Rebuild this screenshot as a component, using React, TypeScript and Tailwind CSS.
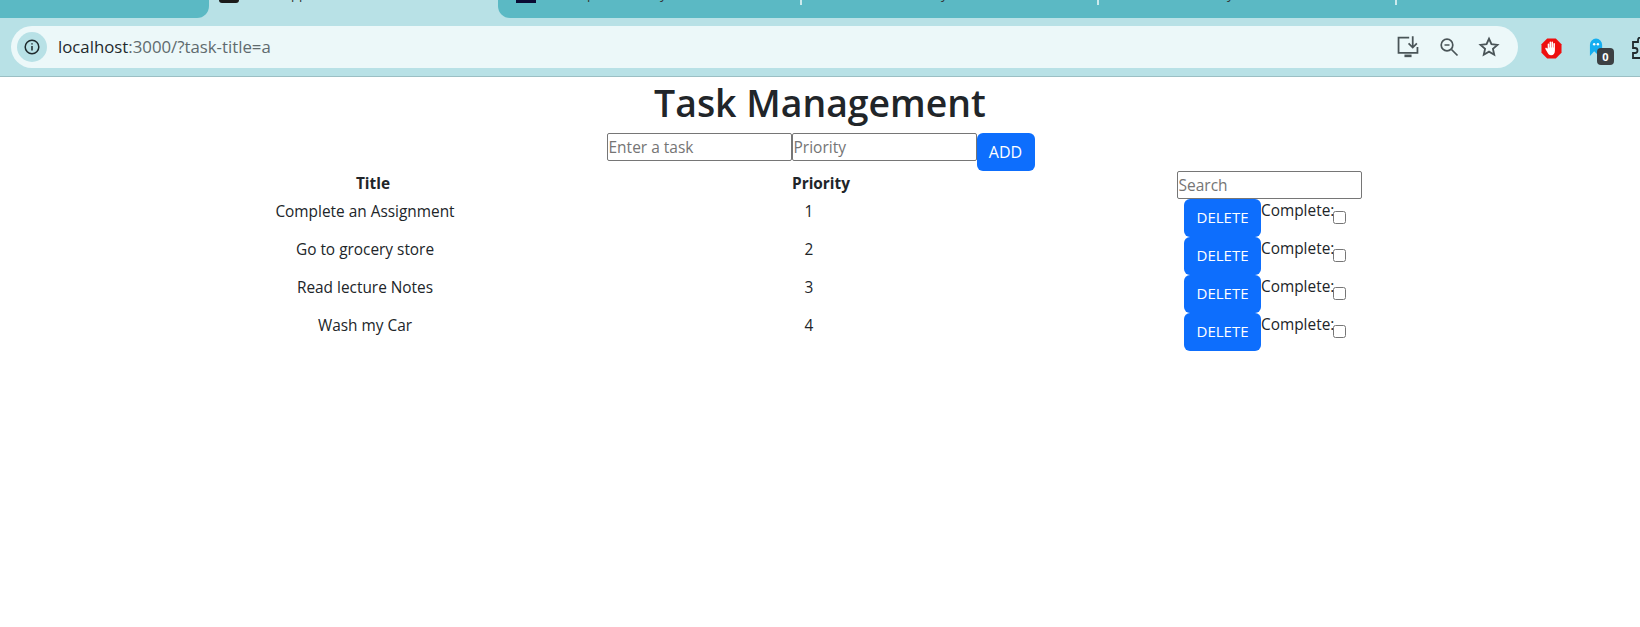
const rows = [
  { title: "Complete an Assignment", priority: 1 },
  { title: "Go to grocery store", priority: 2 },
  { title: "Read lecture Notes", priority: 3 },
  { title: "Wash my Car", priority: 4 },
]

const Separator = () => <div className="w-[2px] h-[5px] shrink-0 bg-[#cdeaed]"></div>

const TabStrip = () => {
  const label = "text-[13px] leading-[18px] -mt-[15px] text-[#333]"
  return <div className="flex h-[18px] bg-[#b8e1e6] overflow-hidden">
    <div className="w-[209px] h-full bg-[#5bb9c4] rounded-br-[12px]"></div>
    <div className="w-[289px] flex items-start pl-[10px]">
      <div className="w-[20px] h-[13px] -mt-[10px] rounded-[3px] bg-[#1b1b1b]"></div>
      <span className={`ml-[7px] ${label}`}>React App</span>
    </div>
    <div className="flex-1 h-full flex items-start bg-[#5bb9c4] rounded-bl-[12px]">
      <div className="w-[302px] flex items-start pl-[18px]">
        <div className="w-[20px] h-[13px] -mt-[10px] bg-[#0a0a33]"></div>
        <span className={`ml-[51px] ${label}`}>p</span>
        <span className={`ml-[65px] ${label}`}>y</span>
      </div>
      <Separator />
      <div className="w-[295px] flex items-start pl-[139px]">
        <span className={label}>y</span>
      </div>
      <Separator />
      <div className="w-[296px] flex items-start pl-[128px]">
        <span className={label}>y</span>
      </div>
      <Separator />
    </div>
  </div>
}

const Toolbar = () => {
  return <div className="h-[59px] bg-[#b8e1e6] border-b border-[#9bbfc4] pt-2 pl-[11px] flex items-start">
    <div className="w-[1507px] shrink-0 h-[42px] rounded-full bg-[#ecf8f9] flex items-center pl-[6px]">
      <div className="w-[30px] h-[30px] rounded-full bg-[#b8e1e6] flex items-center justify-center">
        <svg width="16" height="16" viewBox="0 0 16 16" fill="none" stroke="#1f2a2d" strokeWidth="1.5">
          <circle cx="8" cy="8" r="6.8" />
          <path d="M8 7v4.5M8 4.2v1.4" />
        </svg>
      </div>
      <span className="ml-[11px] text-[16.8px] text-[#1f2a2d]">localhost<span className="text-[#5f6b6e]">:3000/?task-title=a</span></span>
      <div className="ml-auto flex items-center">
        <svg width="26" height="26" viewBox="0 0 22 22" fill="none" stroke="#4a5558" strokeWidth="1.5">
          <path d="M12 3H3v13h16v-5" />
          <path d="M8 18.5h6" strokeWidth="2.2" />
          <path d="M15 2v9M11.5 8l3.500 3.500L18.500 8" />
        </svg>
        <svg className="ml-[18px]" width="20" height="20" viewBox="0 0 20 20" fill="none" stroke="#4a5558" strokeWidth="1.7">
          <circle cx="8" cy="8" r="5.8" />
          <path d="M5.500 8h5M12.500 12.500l6 6" />
        </svg>
        <svg className="ml-[19px] mr-[18px]" width="22" height="22" viewBox="0 0 24 24" fill="none" stroke="#4a5558" strokeWidth="2">
          <path d="M12 3l2.700 6 6.500.7-4.900 4.300 1.400 6.400L12 17.100l-5.700 3.300 1.400-6.400-4.900-4.300 6.500-.7z" />
        </svg>
      </div>
    </div>
    <div className="flex items-start pt-3 pl-[23px]">
      <svg className="shrink-0" width="21" height="21" viewBox="0 0 22 22">
        <path d="M6.500 0.500h9l6 6v9l-6 6h-9l-6-6v-9z" fill="#ee0f0f" />
        <path d="M7 11V6.500a.8.8 0 011.600 0V10h.4V4.500a.8.8 0 011.600 0V10h.4V4.500a.8.8 0 011.600 0V10h.4V6a.8.8 0 011.600 0v7c0 3-1.500 5-4 5-2 0-3-1-4-3l-2-3.500c-.5-1 .8-1.600 1.400-.8z" fill="#fff" />
      </svg>
      <div className="relative ml-[27px] shrink-0">
        <svg width="15" height="19" viewBox="0 0 16 20">
          <path d="M1 19V7a6.500 6.500 0 0113 0v9l-2.500-2-3 3-3-3z" fill="#14aef0" />
          <circle cx="5.500" cy="6.500" r="1.300" fill="#fff" />
          <circle cx="9.500" cy="6.500" r="1.300" fill="#fff" />
        </svg>
        <div className="absolute left-[8px] top-[10px] w-[17px] h-[17px] rounded-[4px] bg-[#3c4043] text-white text-[11px] font-bold leading-[17px] text-center">0</div>
      </div>
      <svg className="ml-[28px] -mt-px shrink-0" width="22" height="22" viewBox="0 0 22 22" fill="none" stroke="#1f2a2d" strokeWidth="1.8">
        <path d="M1 5h5V3a2.500 2.500 0 015 0v2h5v5h2a2.500 2.500 0 010 5h-2v6H1v-5h2a2.500 2.500 0 000-5H1z" />
      </svg>
    </div>
  </div>
}

export default function App() {
  return <div className="w-[1640px] h-[627px] bg-white overflow-hidden font-['Open_Sans',sans-serif] text-[15.4px] text-[#212529]">
    <TabStrip />
    <Toolbar />
    <h1 className="text-center text-[37.4px] leading-[48px] font-semibold pt-[2px] mb-[6px]">Task Management</h1>
    <div className="flex justify-center items-start h-[38px] pl-[1px]">
      <input placeholder="Enter a task" className="w-[185px] h-[28px] border border-[#767676] rounded-[2px] px-px text-[15.5px] placeholder:text-[#757575]" />
      <input placeholder="Priority" className="w-[185px] h-[28px] border border-[#767676] rounded-[2px] px-px text-[15.5px] placeholder:text-[#757575]" />
      <button className="w-[58px] h-[38px] bg-[#0d6efd] text-white rounded-md text-[16px]">ADD</button>
    </div>
    <table className="ml-[244px] w-[1162px] border-collapse table-fixed">
      <thead>
        <tr>
          <th className="w-[242px] pl-[16px] font-bold text-center align-top pt-[1px]">Title</th>
          <th className="w-[646px] pl-[24px] font-bold text-center align-top pt-[1px]">Priority</th>
          <th className="text-center align-top"><input placeholder="Search" className="block mx-auto w-[185px] h-[28px] border border-[#767676] rounded-[2px] px-px text-[15.5px] font-normal placeholder:text-[#757575]" /></th>
        </tr>
      </thead>
      <tbody>
        {rows.map((row) => (
          <tr key={row.title}>
            <td className="text-center align-top pt-[1px]">{row.title}</td>
            <td className="text-center align-top pt-[1px]">{row.priority}</td>
            <td className="align-top">
              <div className="flex items-start justify-center pr-[8px]">
                <button className="w-[77px] h-[38px] pb-[1px] bg-[#0d6efd] text-white rounded-md text-[15px]">DELETE</button>
                <span className="w-[72px]">Complete:</span>
                <input type="checkbox" className="mt-[12px] w-[13px] h-[13px]" />
              </div>
            </td>
          </tr>
        ))}
      </tbody>
    </table>
  </div>
}
